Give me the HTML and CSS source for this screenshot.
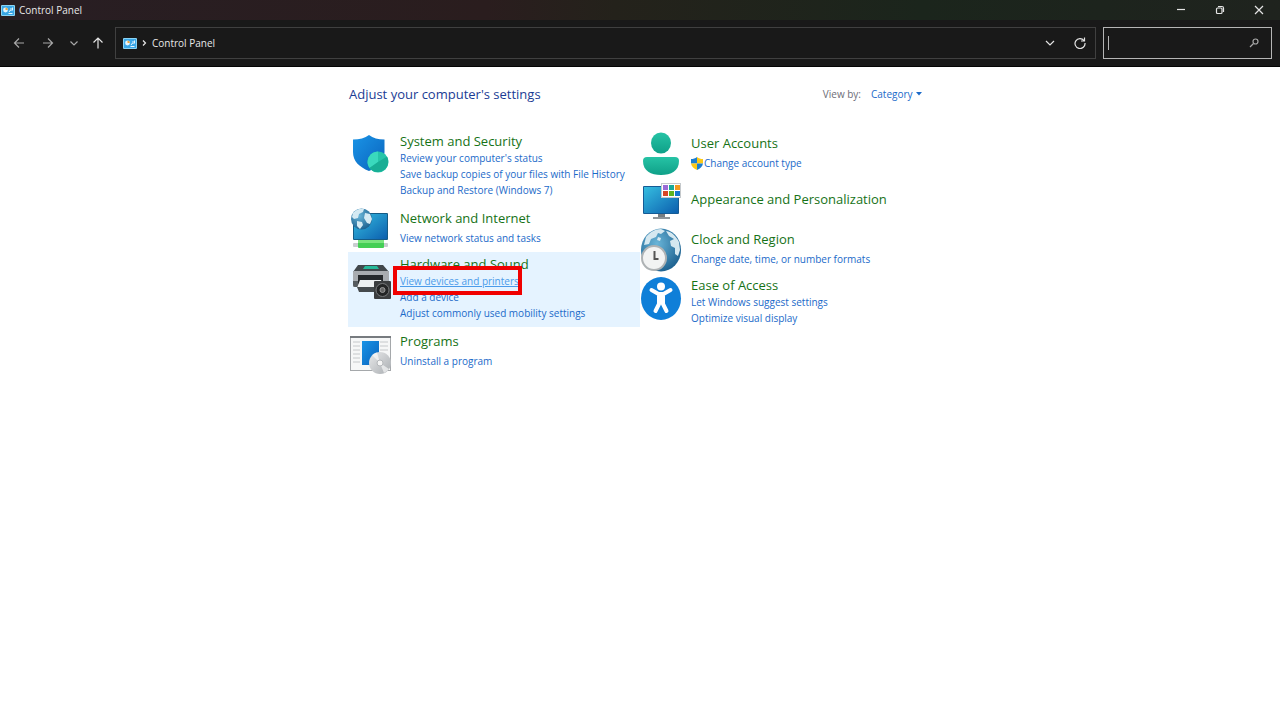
FILE: index.html
```html
<!DOCTYPE html>
<html lang="en">
<head>
    <meta charset="UTF-8">
    <meta name="viewport" content="width=device-width, initial-scale=1.0">
    <title>Control Panel</title>
    <link rel="stylesheet" href="styles.css">
</head>
<body>
    <!-- shared symbols -->
    <svg class="defs" aria-hidden="true">
        <defs>
            <linearGradient id="blue" x1="0" y1="0" x2="1" y2="1">
                <stop offset="0" stop-color="#1a94e6"/>
                <stop offset="1" stop-color="#0a63bd"/>
            </linearGradient>
            <linearGradient id="screen" x1="0" y1="0" x2="1" y2="1">
                <stop offset="0" stop-color="#35bde0"/>
                <stop offset="1" stop-color="#0c5fae"/>
            </linearGradient>
            <linearGradient id="teal" x1="0" y1="0" x2="0" y2="1">
                <stop offset="0" stop-color="#26c3a5"/>
                <stop offset="1" stop-color="#0fa088"/>
            </linearGradient>
            <linearGradient id="disc" x1="0" y1="0" x2="1" y2="1">
                <stop offset="0" stop-color="#e9eaeb"/>
                <stop offset="1" stop-color="#a9adb1"/>
            </linearGradient>
            <radialGradient id="ocean" cx="0.4" cy="0.35" r="0.7">
                <stop offset="0" stop-color="#69b5d8"/>
                <stop offset="1" stop-color="#1b5f8e"/>
            </radialGradient>
            <symbol id="panel" viewBox="0 0 14 11">
                <rect width="14" height="11" rx="1" fill="#8ad4f6"/>
                <rect x="1" y="1" width="12" height="9" fill="#3aa6e6"/>
                <circle cx="4.5" cy="5" r="2.4" fill="#e6f5fd"/>
                <path d="M4.5 5V2.4a2.6 2.6 0 0 1 2.4 2.6z" fill="#f0a63c"/>
                <path d="M8 7l1.5-2M10 3v3M11.5 2.5v3M7.5 8.5h4" stroke="#e6f5fd" fill="none"/>
            </symbol>
        </defs>
    </svg>

    <header class="window-header">
        <div class="title-bar">
            <svg class="panel-icon"><use href="#panel"/></svg>
            <span class="title">Control Panel</span>
            <div class="window-buttons">
                <button aria-label="Minimize"><svg width="10" height="10" viewBox="0 0 10 10"><path d="M1 4.5h8"/></svg></button>
                <button aria-label="Restore"><svg width="10" height="10" viewBox="0 0 10 10"><rect x="1.5" y="3" width="5.5" height="5.5" rx="1"/><path d="M3 1.5h4A1.5 1.5 0 0 1 8.500 3v4"/></svg></button>
                <button aria-label="Close"><svg width="10" height="10" viewBox="0 0 10 10"><path d="M1 1l8 8M9 1l-8 8"/></svg></button>
            </div>
        </div>
        <div class="toolbar">
            <nav class="nav-buttons" aria-label="History">
                <button class="dim" aria-label="Back"><svg width="12" height="12" viewBox="0 0 12 12"><path d="M11 6H1.5M6 1.5L1.5 6 6 10.5"/></svg></button>
                <button class="dim" aria-label="Forward"><svg width="12" height="12" viewBox="0 0 12 12"><path d="M1 6h9.5M6 1.5L10.5 6 6 10.5"/></svg></button>
                <button class="narrow dim" aria-label="Recent locations"><svg width="10" height="10" viewBox="0 0 10 10"><path d="M1.5 3.500L5 7l3.500-3.500"/></svg></button>
                <button class="narrow" aria-label="Up"><svg width="12" height="12" viewBox="0 0 12 12"><path d="M6 11.5V1M1.5 5.5L6 1l4.5 4.5"/></svg></button>
            </nav>
            <div class="address-bar">
                <svg class="panel-icon"><use href="#panel"/></svg>
                <svg class="crumb-arrow" width="5" height="8" viewBox="0 0 5 8"><path d="M1 1.5L3.5 4 1 6.5"/></svg>
                <a href="#">Control Panel</a>
                <div class="address-buttons">
                    <button aria-label="Previous locations"><svg width="10" height="10" viewBox="0 0 10 10"><path d="M1 3l4 4 4-4"/></svg></button>
                    <button aria-label="Refresh"><svg width="12" height="12" viewBox="0 0 12 12"><path d="M10 3.5A5 5 0 1 0 11 6M10.5.5v3.5H7"/></svg></button>
                </div>
            </div>
            <div class="search-box">
                <span class="caret"></span>
                <input type="text" aria-label="Search Control Panel">
                <svg width="10" height="10" viewBox="0 0 10 10"><circle cx="6.5" cy="3.5" r="2.5"/><path d="M4.5 5.5L1 9"/></svg>
            </div>
        </div>
    </header>

    <main class="content">
        <div class="content-header">
            <h1>Adjust your computer's settings</h1>
            <div class="view-by">
                <label for="view">View by:</label>
                <select id="view">
                    <option>Category</option>
                </select>
                <svg width="6" height="4" viewBox="0 0 6 4"><path d="M0 0h6L3 3.5z"/></svg>
            </div>
        </div>

        <div class="categories">
            <div class="column">
                <section class="category">
                    <svg class="icon" viewBox="0 0 42 44">
                        <path d="M19 3c4 3 9 4.500 15.500 4.500V20c0 9-6 15-15.500 19C9 35 3 29 3 20V7.500C9.500 7.500 15 6 19 3z" fill="url(#blue)"/>
                        <circle cx="28" cy="30" r="10.5" fill="#25c5a9"/>
                        <path d="M28 30V19.500A10.500 10.500 0 0 0 19.500 36z" fill="#3ad9bd"/>
                        <path d="M28 30l9-5.500A10.500 10.500 0 0 1 19.500 36z" fill="#18ae95"/>
                    </svg>
                    <div class="links">
                        <h2><a href="#">System and Security</a></h2>
                        <a href="#">Review your computer's status</a>
                        <a href="#">Save backup copies of your files with File History</a>
                        <a href="#">Backup and Restore (Windows 7)</a>
                    </div>
                </section>

                <section class="category single">
                    <svg class="icon" viewBox="0 0 42 44">
                        <rect x="3" y="36" width="35" height="4" rx="1" fill="#c9cdd0"/>
                        <rect x="8" y="33" width="26" height="8" rx="1" fill="#44cf55"/>
                        <rect x="8" y="33" width="26" height="3" fill="#7be47f"/>
                        <rect x="3" y="6" width="35" height="27" rx="1" fill="#155b85"/>
                        <rect x="4" y="7" width="33" height="25" fill="url(#screen)"/>
                        <circle cx="11.5" cy="12" r="10.5" fill="url(#ocean)"/>
                        <path d="M3 6c3-4 8-5 11-4l-1 3-4 2-1 4-4 1-2-2zM15 6l5 1 2 5-2 5-3-1-3-5zM7 14l5 1 1 3-3 4-3-3z" fill="#d5eaf3"/>
                    </svg>
                    <div class="links">
                        <h2><a href="#">Network and Internet</a></h2>
                        <a href="#">View network status and tasks</a>
                    </div>
                </section>

                <section class="category selected">
                    <svg class="icon" viewBox="0 0 42 44">
                        <path d="M8 10h25l6 7H3z" fill="#41474b"/>
                        <path d="M15 11h12l2 3H13z" fill="#25b99a"/>
                        <rect x="3" y="16" width="36" height="16" rx="1" fill="#a8acb0"/>
                        <path d="M3 26h36v4a2 2 0 0 1-2 2H5a2 2 0 0 1-2-2z" fill="#555b5f"/>
                        <rect x="8" y="20" width="25" height="9" fill="#25292c"/>
                        <path d="M10 25h21l3 8H7z" fill="#edf0f1"/>
                        <path d="M7 32h24v5H9z" fill="#454a4d"/>
                        <rect x="24" y="26" width="17" height="18" rx="1" fill="#3b3d3f"/>
                        <circle cx="32.5" cy="35" r="6.5" fill="#242526" stroke="#77797b"/>
                        <circle cx="32.5" cy="35" r="2.5" fill="#666" stroke="#999"/>
                    </svg>
                    <div class="links">
                        <h2><a href="#">Hardware and Sound</a></h2>
                        <a href="#" class="hovered">View devices and printers</a>
                        <a href="#">Add a device</a>
                        <a href="#">Adjust commonly used mobility settings</a>
                        <div class="highlight-box"></div>
                    </div>
                </section>

                <section class="category single">
                    <svg class="icon" viewBox="0 0 42 44">
                        <rect x="0.5" y="6.5" width="40" height="34" fill="#f6f7f7" stroke="#a5a8ab"/>
                        <path d="M0 7h41" stroke="#777b7f" stroke-width="2"/>
                        <path d="M3 12h7M3 16h7M3 20h7M3 24h7M3 28h7M3 32h7M30 12h8M30 16h8M30 20h8" stroke="#c5c8ca"/>
                        <rect x="12" y="11" width="17" height="24" fill="url(#blue)"/>
                        <circle cx="30" cy="33" r="11" fill="url(#disc)"/>
                        <path d="M30 33l-8-8a11 11 0 0 1 5-2.500zM30 33l9 6a11 11 0 0 1-5 4z" fill="#fff" opacity="0.6"/>
                        <circle cx="30" cy="33" r="3" fill="#f5f5f5" stroke="#b4b7ba"/>
                    </svg>
                    <div class="links">
                        <h2><a href="#">Programs</a></h2>
                        <a href="#">Uninstall a program</a>
                    </div>
                </section>
            </div>

            <div class="column">
                <section class="category single">
                    <svg class="icon" viewBox="0 0 42 44">
                        <ellipse cx="20" cy="11" rx="10" ry="10.5" fill="url(#teal)"/>
                        <path d="M6 25h28q4 0 4 4c0 10-8 14-18 14S2 39 2 29q0-4 4-4z" fill="url(#teal)"/>
                    </svg>
                    <div class="links">
                        <h2><a href="#">User Accounts</a></h2>
                        <a href="#" class="with-shield">
                            <svg width="12" height="13" viewBox="0 0 12 13">
                                <path d="M6 0c2 1.500 3.500 2 6 2v4.500H6z" fill="#fbc916"/>
                                <path d="M6 0C4 1.500 2.500 2 0 2v4.500h6z" fill="#1c7fd0"/>
                                <path d="M0 6.500h6V13C2.500 11.500.5 9.500 0 6.500z" fill="#fbc916"/>
                                <path d="M12 6.500H6V13c3.500-1.500 5.500-3.500 6-6.500z" fill="#1c7fd0"/>
                            </svg>
                            Change account type
                        </a>
                    </div>
                </section>

                <section class="category title-only">
                    <svg class="icon" viewBox="0 0 42 44">
                        <rect x="2" y="6" width="36" height="28" rx="1" fill="#155b95"/>
                        <rect x="3" y="7" width="34" height="26" fill="url(#screen)"/>
                        <path d="M17 34h7v3h-7z" fill="#777d82"/>
                        <path d="M12 37h17v2H12z" fill="#8e9499"/>
                        <rect x="20.5" y="3.5" width="19" height="14" fill="#fff" stroke="#c5c9cc"/>
                        <path d="M22 5h5v5h-5z" fill="#9a6ad6"/>
                        <path d="M28 5h5v5h-5z" fill="#1aaa9a"/>
                        <path d="M34 5h5v5h-5z" fill="#f39a22"/>
                        <path d="M22 11h5v5h-5z" fill="#d84626"/>
                        <path d="M28 11h5v5h-5z" fill="#5fb31f"/>
                        <path d="M34 11h5v5h-5z" fill="#1677cf"/>
                    </svg>
                    <div class="links">
                        <h2><a href="#">Appearance and Personalization</a></h2>
                    </div>
                </section>

                <section class="category single">
                    <svg class="icon" viewBox="0 0 42 44">
                        <ellipse cx="20" cy="22" rx="20" ry="21.5" fill="url(#ocean)"/>
                        <path d="M5 9c4-5 9-8 15-8l4 2-4 3-3-1-2 4-5 2-2 5-5 1zM25 3c6 1 10 5 13 11l1 8-2 6-3-2v-6l-4-2-1-5 4-2-5-3zM17 9l3 1-1 3-3-1z" fill="#d5e8f0"/>
                        <circle cx="13" cy="30" r="12" fill="#f2f3f3" stroke="#aeb2b4" stroke-width="2"/>
                        <path d="M13.5 23v8h4" fill="none" stroke="#555" stroke-width="2"/>
                    </svg>
                    <div class="links">
                        <h2><a href="#">Clock and Region</a></h2>
                        <a href="#">Change date, time, or number formats</a>
                    </div>
                </section>

                <section class="category">
                    <svg class="icon" viewBox="0 0 42 44">
                        <ellipse cx="20" cy="22.5" rx="20" ry="21.5" fill="#0f7fd8"/>
                        <circle cx="20" cy="10.5" r="4" fill="#fff"/>
                        <path d="M10.500 14l7 4h5l7-4M20 19v6M18 19v9l-3.500 7M22 19v9l3.500 7" fill="none" stroke="#fff" stroke-width="4" stroke-linecap="round" stroke-linejoin="round"/>
                    </svg>
                    <div class="links">
                        <h2><a href="#">Ease of Access</a></h2>
                        <a href="#">Let Windows suggest settings</a>
                        <a href="#">Optimize visual display</a>
                    </div>
                </section>
            </div>
        </div>
    </main>
</body>
</html>
```
FILE: styles.css
```css
* {
    box-sizing: border-box;
}

body {
    margin: 0;
    font-family: 'Open Sans', 'Noto Sans', sans-serif;
    font-size: 10px;
    line-height: 16px;
    background-color: #fff;
    color: #6d6d78;
}

a {
    color: #1b6ac9;
    text-decoration: none;
}

a:hover {
    text-decoration: underline;
}

button {
    display: flex;
    align-items: center;
    justify-content: center;
    padding: 0;
    border: none;
    background: none;
    color: #e4e4e4;
}

svg {
    flex-shrink: 0;
}

.defs {
    position: absolute;
    width: 0;
    height: 0;
}

/* window header */
.window-header {
    background-color: #191919;
    border-bottom: 1px solid #050505;
    color: #e8e8e8;
}

.window-header button svg,
.crumb-arrow,
.search-box svg {
    fill: none;
    stroke: currentColor;
    stroke-width: 1.2;
}

.panel-icon {
    width: 14px;
    height: 11px;
}

.title-bar {
    display: flex;
    align-items: center;
    gap: 4px;
    height: 20px;
    padding: 0 2px 0 1px;
    background: linear-gradient(90deg, #281e23 0%, #2a1d1e 38%, #24221b 48%, #1b251c 72%, #1f231e 100%);
}

.window-buttons {
    display: flex;
    margin-left: auto;
}

.window-buttons button {
    width: 39px;
    height: 20px;
}

.toolbar {
    display: flex;
    padding: 7px 8px 7px 4px;
}

.nav-buttons {
    display: flex;
    margin-right: 5px;
}

.nav-buttons button {
    width: 29px;
}

.nav-buttons .narrow {
    width: 24px;
}

.nav-buttons .dim {
    color: #a8a8a8;
}

.address-bar {
    display: flex;
    align-items: center;
    flex-grow: 1;
    gap: 5px;
    height: 32px;
    padding-left: 7px;
    border: 1px solid #404040;
    margin-right: 7px;
}

.address-bar a {
    color: #e8e8e8;
}

.address-buttons {
    display: flex;
    margin-left: auto;
}

.address-buttons button {
    width: 30px;
    height: 30px;
}

.search-box {
    display: flex;
    align-items: center;
    width: 169px;
    padding: 0 12px 0 4px;
    border: 1px solid #b5b5b5;
    color: #a8a8a8;
}

.search-box input {
    flex-grow: 1;
    min-width: 0;
    padding: 0;
    border: none;
    outline: none;
    background: none;
    color: #e8e8e8;
    font: inherit;
}

.caret {
    width: 1px;
    height: 14px;
    background-color: #b5b5b5;
}

/* content */
.content {
    max-width: 584px;
    margin: 0 auto;
    padding-top: 18px;
}

.content-header {
    display: flex;
    justify-content: space-between;
    align-items: center;
    height: 18px;
    padding: 0 10px 0 1px;
    margin-bottom: 26px;
}

h1,
h2 {
    margin: 0;
    font-size: 13px;
    font-weight: normal;
    line-height: 18px;
}

h1 {
    color: #1b3c94;
}

h2 a {
    color: #167216;
}

.view-by {
    display: flex;
    align-items: center;
}

.view-by select {
    padding: 0;
    margin: 0 3px 0 10px;
    border: none;
    background: none;
    appearance: none;
    color: #1b6ac9;
    font: inherit;
}

.view-by svg {
    fill: #1b6ac9;
}

.categories {
    display: grid;
    grid-template-columns: 1fr 1fr;
}

.category {
    display: flex;
    gap: 8px;
    padding: 3px 0 6px 2px;
}

.column + .column .category {
    padding-left: 1px;
}

.icon {
    width: 42px;
    height: 44px;
}

.links {
    display: flex;
    flex-direction: column;
    align-items: flex-start;
    position: relative;
}

.single,
.title-only {
    height: 48px;
    padding-bottom: 0;
}

.single .links {
    padding-top: 2px;
}

.single h2 {
    margin-bottom: 3px;
}

.title-only .links {
    padding-top: 10px;
}

.with-shield {
    display: flex;
    align-items: center;
    gap: 1px;
}

.selected {
    background-color: #e5f3ff;
}

.hovered {
    color: #4b9bea;
    text-decoration: underline;
}

.highlight-box {
    position: absolute;
    top: 11px;
    left: -7px;
    width: 129px;
    height: 29px;
    border: 4px solid #f00000;
    pointer-events: none;
}
```
